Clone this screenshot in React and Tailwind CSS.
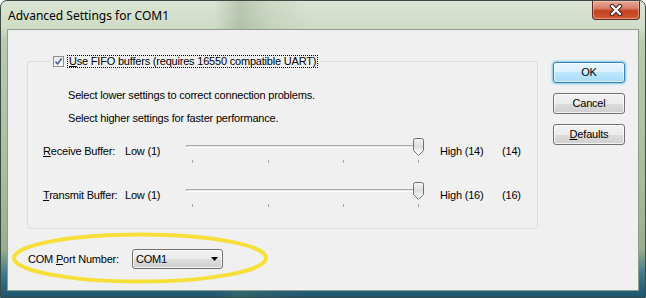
import React from "react";

const Slider = () => (
  <svg width="240" height="26" className="block">
    <defs>
      <linearGradient id="thumb" x1="0" y1="0" x2="0" y2="1">
        <stop offset="0" stopColor="#f4f4f4" />
        <stop offset="0.5" stopColor="#dcdcdc" />
        <stop offset="0.75" stopColor="#f6f6f6" />
        <stop offset="1" stopColor="#ffffff" />
      </linearGradient>
    </defs>
    <rect x="0" y="7" width="1" height="3" fill="#a8a8a8" />
    <rect x="0" y="7" width="238" height="1" fill="#acacac" />
    <rect x="1" y="8" width="237" height="1" fill="#e4e4e4" />
    <rect x="0" y="9" width="238" height="1" fill="#ffffff" />
    {[6, 82, 157, 232].map((x) => (
      <rect key={x} x={x} y="22" width="1" height="3" fill="#a6a6a6" />
    ))}
    <path
      d="M227.5 2.5 Q227.5 0.5 229.5 0.5 H235.5 Q237.5 0.5 237.5 2.5 V12.5 L232.5 17.5 L227.5 12.5 Z"
      fill="url(#thumb)"
      stroke="#6f6f6f"
    />
  </svg>
);

const Btn = ({ children, def }) => (
  <button
    className={`w-[72px] h-[21px] rounded-[3px] border flex items-center justify-center text-[11px] text-black ${
      def
        ? "border-[#3c7fb1] bg-[linear-gradient(180deg,#e8f5fd_0%,#d8effc_50%,#bee6fd_50%,#a7d9f5_100%)] shadow-[inset_0_0_0_1px_rgba(255,255,255,0.6),0_0_2px_1px_#78c8ef]"
        : "border-[#707070] bg-[linear-gradient(180deg,#f2f2f2_0%,#ebebeb_50%,#dddddd_50%,#cfcfcf_100%)] shadow-[inset_0_0_0_1px_rgba(255,255,255,0.7)]"
    }`}
  >
    {children}
  </button>
);

const BufferRow = ({ letter, rest, high, value }) => (
  <div className="flex items-start h-[26px] pl-[15px]">
    <span className="w-[82px] mt-[7px] leading-[13px]">
      <span className="underline">{letter}</span>
      {rest}
    </span>
    <span className="w-[61px] mt-[7px] leading-[13px]">Low (1)</span>
    <div className="w-[254px]">
      <Slider />
    </div>
    <span className="w-[62px] mt-[7px] leading-[13px]">{high}</span>
    <span className="mt-[7px] leading-[13px]">{value}</span>
  </div>
);

export default function App() {
  return (
    <div className="relative w-[646px] h-[298px] flex flex-col rounded-t-[7px] border border-[#3d4b45] overflow-hidden font-['Liberation_Sans',Arial,sans-serif] text-[11px] tracking-[-0.2px] text-black bg-[linear-gradient(90deg,transparent_33%,rgba(105,125,95,0.28)_37%,rgba(105,125,95,0.1)_42%,transparent_48%),linear-gradient(180deg,#dbe4d3_0%,#cfdcc6_9%,#b9caae_14%,#a9bd9c_60%,#98ae8e_84%,#3f7b8c_92%,#1c5570_100%)]">
      {/* title bar */}
      <div className="h-[28px] flex items-start justify-between shrink-0">
        <span className="pl-[7px] pt-[8px] text-[12px] leading-[14px] tracking-normal font-['Noto_Sans',Arial,sans-serif] text-black">
          Advanced Settings for COM1
        </span>
        <div className="mr-[5px] w-[48px] h-[19px] rounded-b-[4px] border border-t-0 border-[#5a2a22] bg-[linear-gradient(180deg,#e9a999_0%,#d8806b_40%,#c4401f_55%,#d25a35_100%)] shadow-[inset_0_0_0_1px_rgba(255,210,190,0.5)] flex items-center justify-center">
          <svg width="14" height="12" viewBox="0 0 14 12">
            <path d="M3 2 L11 10 M11 2 L3 10" stroke="#3b2520" strokeWidth="4.4" strokeLinecap="round" />
            <path d="M3 2 L11 10 M11 2 L3 10" stroke="#ffffff" strokeWidth="2.4" strokeLinecap="round" />
          </svg>
        </div>
      </div>

      {/* client area */}
      <div className="mx-[6px] mb-[6px] flex-1 border border-[#8e9c8b] bg-[#f0f0f0] flex flex-col">
        <div className="flex items-start pl-[19px] pt-[25px]">
          <fieldset className="w-[511px] border border-[#d5dfe5] rounded-[3px] pb-[20px]">
            <legend className="ml-[22px] px-[3px] flex items-center h-[13px]">
              <span className="w-[11px] h-[11px] border border-[#8f8f8f] bg-[linear-gradient(180deg,#e6e6e6,#ffffff)] flex items-center justify-center">
                <svg width="9" height="9" viewBox="0 0 9 9">
                  <path d="M1.5 4.5 L3.6 7 L7.6 1.5" fill="none" stroke="#4a5f97" strokeWidth="1.6" />
                </svg>
              </span>
              <span className="ml-[3px] px-[1px] border border-dotted border-black leading-[11px]">
                <span className="underline">U</span>se FIFO buffers (requires 16550 compatible UART)
              </span>
            </legend>
            <div className="pt-[21px] pl-[40px]">
              <p className="leading-[13px]">Select lower settings to correct connection problems.</p>
              <p className="leading-[13px] mt-[10px]">Select higher settings for faster performance.</p>
            </div>
            <div className="mt-[13px]">
              <BufferRow letter="R" rest="eceive Buffer:" high="High (14)" value="(14)" />
            </div>
            <div className="mt-[18px]">
              <BufferRow letter="T" rest="ransmit Buffer:" high="High (16)" value="(16)" />
            </div>
          </fieldset>

          <div className="ml-[15px] mt-[7px] flex flex-col gap-[10px]">
            <Btn def>OK</Btn>
            <Btn>Cancel</Btn>
            <Btn>
              <span className="underline">D</span>efaults
            </Btn>
          </div>
        </div>

        <div className="flex items-center pl-[20px] mt-[20px]">
          <span className="w-[104px]">
            COM <span className="underline">P</span>ort Number:
          </span>
          <div className="w-[91px] h-[20px] rounded-[3px] border border-[#707070] bg-[linear-gradient(180deg,#f2f2f2_0%,#ebebeb_50%,#dddddd_50%,#cfcfcf_100%)] shadow-[inset_0_0_0_1px_rgba(255,255,255,0.7)] flex items-center justify-between pl-[3px] pr-[4px]">
            <span>COM1</span>
            <svg width="7" height="4" viewBox="0 0 7 4">
              <path d="M0 0 H7 L3.5 4 Z" fill="#000" />
            </svg>
          </div>
        </div>
      </div>

      {/* annotation ellipse */}
      <svg className="absolute left-0 top-0 pointer-events-none" width="646" height="298">
        <ellipse cx="139" cy="257" rx="126" ry="23.5" fill="none" stroke="#f7df3a" strokeWidth="4" />
      </svg>
    </div>
  );
}
